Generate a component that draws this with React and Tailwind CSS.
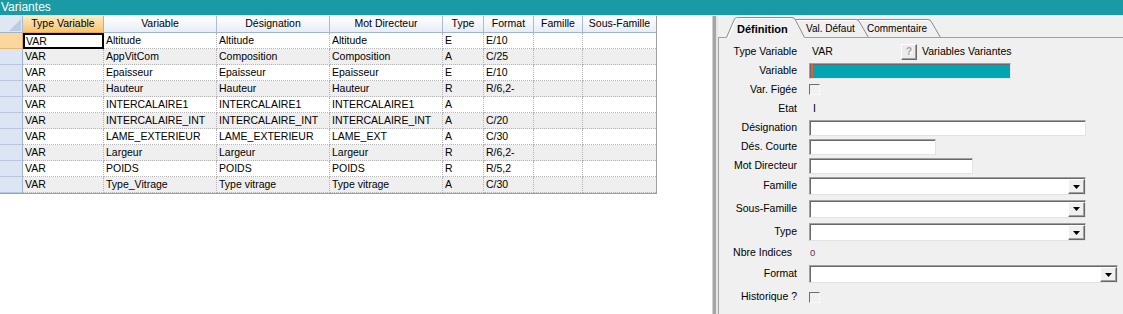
import React from "react";

const COLS = [
  { label: "Type Variable", w: "w-[81px]" },
  { label: "Variable", w: "w-[113px]" },
  { label: "Désignation", w: "w-[113px]" },
  { label: "Mot Directeur", w: "w-[113px]" },
  { label: "Type", w: "w-[41px]" },
  { label: "Format", w: "w-[50px]" },
  { label: "Famille", w: "w-[49px]" },
  { label: "Sous-Famille", w: "w-[73px]" },
];

const ROWS = [
  ["VAR", "Altitude", "Altitude", "Altitude", "E", "E/10", "", ""],
  ["VAR", "AppVitCom", "Composition", "Composition", "A", "C/25", "", ""],
  ["VAR", "Epaisseur", "Epaisseur", "Epaisseur", "E", "E/10", "", ""],
  ["VAR", "Hauteur", "Hauteur", "Hauteur", "R", "R/6,2-", "", ""],
  ["VAR", "INTERCALAIRE1", "INTERCALAIRE1", "INTERCALAIRE1", "A", "", "", ""],
  ["VAR", "INTERCALAIRE_INT", "INTERCALAIRE_INT", "INTERCALAIRE_INT", "A", "C/20", "", ""],
  ["VAR", "LAME_EXTERIEUR", "LAME_EXTERIEUR", "LAME_EXT", "A", "C/30", "", ""],
  ["VAR", "Largeur", "Largeur", "Largeur", "R", "R/6,2-", "", ""],
  ["VAR", "POIDS", "POIDS", "POIDS", "R", "R/5,2", "", ""],
  ["VAR", "Type_Vitrage", "Type vitrage", "Type vitrage", "A", "C/30", "", ""],
];

function Grid() {
  return (
    <div className="inline-flex flex-col border-r border-b border-[#a0a0a0] text-[10.5px] text-black">
      <div className="flex">
        <div className="w-[23px] h-[17px] bg-[#dfe7f2] border-r border-b border-r-[#a5b9d4] border-b-[#9fb4cf] flex items-end justify-end pr-[1px] pb-[1px]">
          <svg width="12" height="12" viewBox="0 0 12 12">
            <polygon points="12,0 12,12 0,12" fill="#bccbdf" />
          </svg>
        </div>
        {COLS.map((c, i) => (
          <div
            key={c.label}
            className={`${c.w} h-[17px] flex items-center justify-center border-r border-b last:border-r-0 ${
              i === 0
                ? "bg-linear-to-b from-[#fdeac3] to-[#f7c468] border-r-[#e3aa55] border-b-[#eaa94a]"
                : "bg-linear-to-b from-[#ffffff] to-[#e7edf5] border-r-[#a9bcd5] border-b-[#9fb4cf]"
            }`}
          >
            {c.label}
          </div>
        ))}
      </div>
      {ROWS.map((r, ri) => (
        <div key={ri} className={`flex ${ri % 2 === 1 ? "bg-[#efefef]" : "bg-white"}`}>
          <div
            className={`w-[23px] h-[16px] border-r border-b ${
              ri === 0
                ? "bg-[#fcd79d] border-r-[#e3aa55] border-b-[#e9b56a]"
                : "bg-[#dbe5f3] border-r-[#9fb5d2] border-b-[#b6c7de]"
            }`}
          />
          {COLS.map((c, ci) =>
            ri === 0 && ci === 0 ? (
              <div
                key={ci}
                className={`${c.w} h-[16px] border-2 border-black pl-[1px] leading-[12px] whitespace-nowrap overflow-hidden`}
              >
                {r[ci]}
              </div>
            ) : (
              <div
                key={ci}
                className={`${c.w} h-[16px] border-r border-b border-dotted border-[#b4b4b4] last:border-r-0 pl-[2px] leading-[15px] whitespace-nowrap overflow-hidden`}
              >
                {r[ci]}
              </div>
            )
          )}
        </div>
      ))}
    </div>
  );
}

function Sunken({ w, h = "h-[16px]", bg = "bg-white", children }) {
  return (
    <div
      className={`${w} ${h} ${bg} border border-t-[#a0a0a0] border-l-[#a0a0a0] border-r-[#e3e3e3] border-b-[#e3e3e3] shadow-[inset_1px_1px_0_#696969] flex`}
    >
      {children}
    </div>
  );
}

function Combo({ w }) {
  return (
    <Sunken w={w} h="h-[18px]">
      <div className="flex-1" />
      <div className="w-[17px] mt-[1px] mb-0 mr-0 bg-[#f0f0f0] border border-t-white border-l-white border-r-[#696969] border-b-[#696969] shadow-[inset_-1px_-1px_0_#a0a0a0] flex items-center justify-center">
        <svg width="7" height="4" viewBox="0 0 7 4">
          <polygon points="0,0 7,0 3.5,4" fill="#000" />
        </svg>
      </div>
    </Sunken>
  );
}

function Check() {
  return (
    <div className="w-[11px] h-[11px] border border-t-[#6e6e6e] border-l-[#6e6e6e] border-r-[#fafafa] border-b-[#fafafa] bg-[#f0f0f0]" />
  );
}

function Row({ h, label, labelCls = "", valueCls = "ml-[12px]", children }) {
  return (
    <div className={`flex items-center ${h}`}>
      <div className={`w-[78px] shrink-0 text-right whitespace-nowrap ${labelCls}`}>{label}</div>
      <div className={`${valueCls} flex items-center`}>{children}</div>
    </div>
  );
}

function Tabs() {
  return (
    <div className="relative h-[22px]">
      <svg className="absolute left-0 top-0" width="405" height="22" viewBox="0 0 405 22">
        <path
          d="M136 21.5 L138 5 Q139 3.5 141 3.5 L210 3.5 Q212.5 3.5 213.5 6 L222.5 21.5"
          fill="#f0f0f0"
          stroke="#8c8c8c"
        />
        <path d="M139 21 L140.5 5 Q141 4.5 142 4.5 L210 4.5" fill="none" stroke="#ffffff" />
        <path
          d="M70 21.5 L72 5 Q73 3.5 75 3.5 L138 3.5 Q140.5 3.5 141.5 6 L150.5 21.5"
          fill="#f0f0f0"
          stroke="#8c8c8c"
        />
        <path d="M78 4.5 L138 4.5" fill="none" stroke="#ffffff" />
        <path
          d="M8.5 21.5 L16 4 Q17 1.5 19.5 1.5 L74 1.5 Q76.5 1.5 77.5 4 L86.5 21.5"
          fill="#f0f0f0"
          stroke="#8c8c8c"
        />
        <path d="M10 22 L17.2 4.8 Q18 2.5 20 2.5 L73.5 2.5" fill="none" stroke="#ffffff" />
        <path d="M0 21.5 H8.5 M86.5 21.5 H405" stroke="#a0a0a0" />
      </svg>
      <div className="relative flex pt-[5px] leading-[16px] text-black">
        <div className="w-[19px]" />
        <div className="w-[69px] text-[11px] font-bold">Définition</div>
        <div className="w-[61px] text-[10px]">Val. Défaut</div>
        <div className="text-[10px]">Commentaire</div>
      </div>
    </div>
  );
}

export default function App() {
  return (
    <div className="w-[1123px] h-[314px] flex flex-col overflow-hidden font-['Liberation_Sans',Arial,sans-serif] text-[10.5px] text-black">
      <div className="h-[16px] shrink-0 bg-[#1a9aa4] border-b border-[#cfe9eb] text-white text-[12px] leading-[15px] pl-[1px]">
        Variantes
      </div>
      <div className="flex flex-1 min-h-0">
        <div className="w-[712px] shrink-0 bg-white">
          <Grid />
        </div>
        <div className="w-[6px] shrink-0 bg-[#a5a5a5] border-l border-l-[#d0d0d0] border-r-2 border-r-[#e6e6e6]" />
        <div className="flex-1 flex flex-col bg-[#f0f0f0]">
          <Tabs />
          <div className="flex-1 border-l border-[#a0a0a0] pt-[4px]">
            <Row h="h-[19px]" label="Type Variable">
              <div className="w-[92px] pl-[3px]">VAR</div>
              <div className="w-[16px] h-[16px] bg-[#ececec] border border-t-white border-l-white border-r-[#696969] border-b-[#696969] shadow-[inset_-1px_-1px_0_#a0a0a0] flex items-center justify-center text-[10px] font-bold text-[#a0a0a0] [text-shadow:1px_1px_0_#ffffff]">
                ?
              </div>
              <div className="ml-[5px]">Variables Variantes</div>
            </Row>
            <Row h="h-[19px]" label="Variable">
              <Sunken w="w-[202px]" bg="bg-[#02a6b3]">
                <div className="ml-[1px] self-center w-[2px] h-[13px] bg-[#e8583a]" />
              </Sunken>
            </Row>
            <Row h="h-[19px]" label="Var. Figée">
              <Check />
            </Row>
            <Row h="h-[19px]" label="Etat">
              <div className="pl-[4px]">I</div>
            </Row>
            <Row h="h-[19px]" label="Désignation">
              <Sunken w="w-[277px]" />
            </Row>
            <Row h="h-[19px]" label="Dés. Courte">
              <Sunken w="w-[127px]" />
            </Row>
            <Row h="h-[19px]" label="Mot Directeur">
              <Sunken w="w-[164px]" />
            </Row>
            <Row h="h-[22px]" label="Famille">
              <Combo w="w-[277px]" />
            </Row>
            <Row h="h-[23px]" label="Sous-Famille">
              <Combo w="w-[277px]" />
            </Row>
            <Row h="h-[24px]" label="Type">
              <Combo w="w-[277px]" />
            </Row>
            <Row h="h-[18px]" label="Nbre Indices" labelCls="pr-[5px]" valueCls="ml-[13px]">
              <div className="text-[9.5px] text-[#7b1f5e]">0</div>
            </Row>
            <Row h="h-[24px]" label="Format">
              <Combo w="w-[309px]" />
            </Row>
            <Row h="h-[22px]" label="Historique ?">
              <Check />
            </Row>
          </div>
        </div>
      </div>
    </div>
  );
}
